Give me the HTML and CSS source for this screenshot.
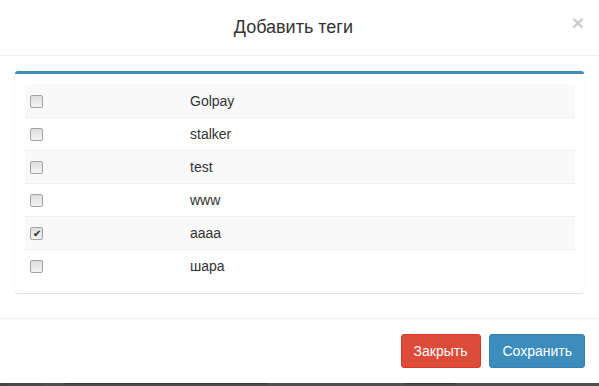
FILE: index.html
```html
<!DOCTYPE html>
<html lang="ru">
<head>
    <meta charset="UTF-8">
    <meta name="viewport" content="width=device-width, initial-scale=1.0">
    <title>Добавить теги</title>
    <link rel="stylesheet" href="styles.css">
</head>
<body>
    <div class="modal">
        <div class="modal-header">
            <button class="close" type="button">&times;</button>
            <h4 class="modal-title">Добавить теги</h4>
        </div>
        <div class="modal-body">
            <div class="box">
                <div class="box-body">
                    <table class="tags">
                        <tr><td class="check"><span class="cb"></span></td><td>Golpay</td></tr>
                        <tr><td class="check"><span class="cb"></span></td><td>stalker</td></tr>
                        <tr><td class="check"><span class="cb"></span></td><td>test</td></tr>
                        <tr><td class="check"><span class="cb"></span></td><td>www</td></tr>
                        <tr><td class="check"><span class="cb checked">&#10004;</span></td><td>aaaa</td></tr>
                        <tr><td class="check"><span class="cb"></span></td><td>шара</td></tr>
                    </table>
                </div>
            </div>
        </div>
        <div class="modal-footer">
            <button class="btn btn-danger" type="button">Закрыть</button>
            <button class="btn btn-primary" type="button">Сохранить</button>
        </div>
    </div>
    <div class="taskbar">
        <span class="seg seg-a"></span>
        <span class="seg seg-b"></span>
        <span class="seg seg-c"></span>
        <span class="seg seg-d"></span>
        <span class="seg seg-e"></span>
        <span class="seg seg-f"></span>
    </div>
</body>
</html>
```

FILE: styles.css
```css
body {
    margin: 0;
    background-color: #fff;
    font-family: "Liberation Sans", Arial, sans-serif;
    font-size: 14px;
    color: #333;
}

.modal {
    width: 599px;
    background-color: #fff;
}

.modal-header {
    padding: 15px 15px;
    height: 25px;
    border-bottom: 1px solid #f0f0f0;
}

.modal-title {
    margin: 0;
    font-size: 18px;
    font-weight: normal;
    line-height: 25px;
    text-align: center;
}

.close {
    float: right;
    padding: 0;
    margin-top: -3px;
    background: none;
    border: none;
    font-family: "Liberation Sans", Arial, sans-serif;
    font-size: 21px;
    font-weight: bold;
    line-height: 1;
    color: #000;
    opacity: 0.2;
}

.modal-body {
    padding: 15px 15px 25px;
}

.box {
    background-color: #fff;
    border-top: 3px solid #3c8dbc;
    border-radius: 3px;
    box-shadow: 0 1px 1px rgba(0, 0, 0, 0.12), 0 0 1px rgba(0, 0, 0, 0.08);
}

.box-body {
    padding: 10px 9px 11px 10px;
}

.tags {
    width: 100%;
    border-collapse: collapse;
}

.tags td {
    padding: 6px 5px;
    line-height: 20px;
    border-top: 1px solid #f0f0f0;
    vertical-align: middle;
}

.tags tr:nth-child(odd) {
    background-color: #f9f9f9;
}

.tags tr:first-child td {
    border-top: 1px solid #fbfbfb;
}

.tags td.check {
    width: 150px;
}

.cb {
    display: block;
    width: 11px;
    height: 11px;
    border: 1px solid #a3a3a3;
    border-radius: 2px;
    background: linear-gradient(#dedede, #f4f4f4);
    font-size: 10px;
    line-height: 11px;
    text-align: center;
    color: #222;
}

.modal-footer {
    border-top: 1px solid #f0f0f0;
    padding: 15px 14px 15px 15px;
    text-align: right;
    height: 34px;
}

.btn {
    display: inline-block;
    height: 34px;
    padding: 6px 12px;
    font-family: "Liberation Sans", Arial, sans-serif;
    font-size: 14px;
    line-height: 20px;
    color: #fff;
    border: 1px solid transparent;
    border-radius: 3px;
    vertical-align: top;
}

.btn + .btn {
    margin-left: 5px;
}

.btn-danger {
    background-color: #dd4b39;
    border-color: #d73925;
}

.btn-primary {
    background-color: #3c8dbc;
    border-color: #367fa9;
}

.taskbar {
    display: flex;
    height: 3px;
    background-color: #505050;
}

.seg {
    display: block;
    height: 3px;
}

.seg-a { width: 7px; background-color: #454545; }
.seg-b { width: 35px; background-color: #4a4a4a; }
.seg-c { width: 23px; background-color: #505050; }
.seg-d { width: 203px; background-color: #4c4c4c; border-top: 1px solid #3a3a3a; margin-left: 0; height: 2px; }
.seg-e { width: 137px; background-color: #505050; }
.seg-f { width: 50px; background-color: #4c4c4c; border-top: 1px solid #3a3a3a; height: 2px; }
```
